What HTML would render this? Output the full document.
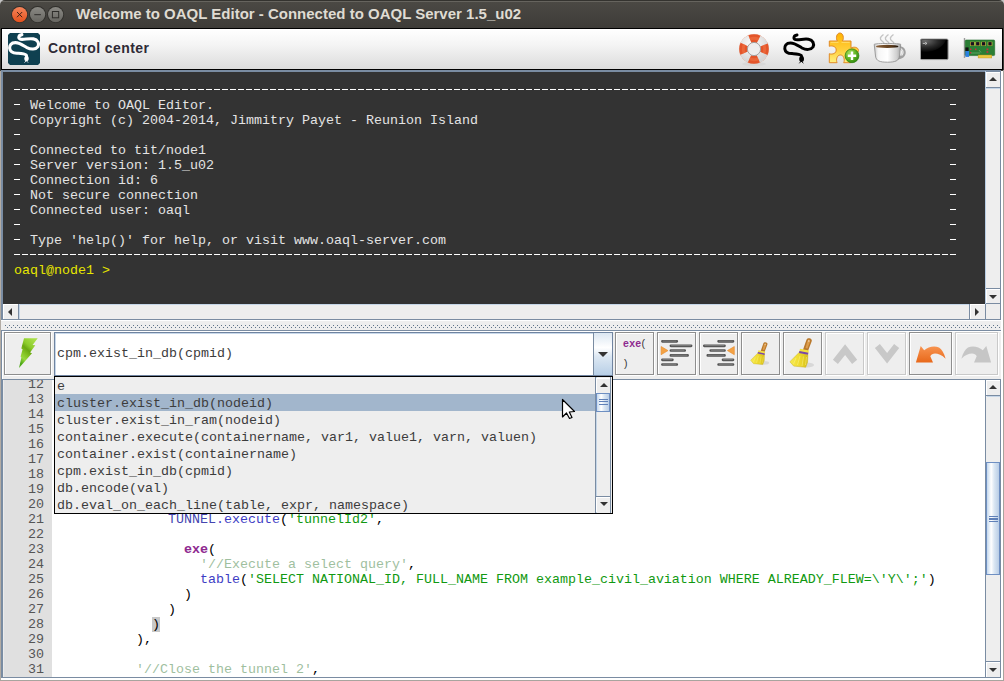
<!DOCTYPE html>
<html><head><meta charset="utf-8">
<style>
*{margin:0;padding:0;box-sizing:border-box}
html,body{width:1004px;height:681px;overflow:hidden;background:#eeeeee;position:relative;font-family:"Liberation Sans",sans-serif}
.a{position:absolute}
.mono{font-family:"Liberation Mono",monospace;font-size:13.333px;line-height:15px;white-space:pre}
#title{left:0;top:0;width:1004px;height:29px;background:linear-gradient(#34332f 0 1px,#66645e 1px 2px,#4b4944 2px,#3e3c38 28px);border-radius:5px 5px 0 0}
#titletext{left:76px;top:5px;font-size:15px;font-weight:bold;color:#dfdbd2;white-space:pre}
#tb{left:0;top:28px;width:1004px;height:43px;background:#3c3b37}
#tbin{left:2px;top:29px;width:1000px;height:40px;background:linear-gradient(#ffffff,#f4f4f4 40%,#dcdcdc)}
#cc{left:48px;top:40px;font-size:14px;font-weight:bold;color:#2e2a36;letter-spacing:0.4px;white-space:pre}
/* console panel */
#cpanel{left:1px;top:70px;width:1000px;height:250px;border:1px solid #7a8ca2;border-left-width:2px;border-top-width:2px;background:#eeeeee}
#console{left:3px;top:72px;width:982px;height:232px;background:#333333;overflow:hidden}
.dash{height:1px;background:repeating-linear-gradient(90deg,#ffffff 0 6px,transparent 6px 8px)}
.sb{background:#eeeeee}
.btnarrow{background:#eeeeee}
</style></head><body>
<!-- left gray column -->
<div class="a" style="left:0;top:70px;width:1px;height:611px;background:#b3aca4"></div>

<div class="a" style="left:0;top:0;width:1004px;height:8px;background:#c4c4c4"></div>
<div id="title" class="a"></div>
<div id="titletext" class="a">Welcome to OAQL Editor - Connected to OAQL Server 1.5_u02</div>
<svg class="a" style="left:0;top:0" width="70" height="29">
  <defs>
    <linearGradient id="gclose" x1="0" y1="0" x2="0" y2="1"><stop offset="0" stop-color="#f5845a"/><stop offset="1" stop-color="#e5521e"/></linearGradient>
    <linearGradient id="ggray" x1="0" y1="0" x2="0" y2="1"><stop offset="0" stop-color="#8a8984"/><stop offset="1" stop-color="#676661"/></linearGradient>
  </defs>
  <circle cx="19.6" cy="14.6" r="8.5" fill="#302f2b"/>
  <circle cx="19.6" cy="14.6" r="7.6" fill="url(#gclose)"/>
  <path d="M17,12 L22.2,17.2 M22.2,12 L17,17.2" stroke="#2e1a12" stroke-width="0.9"/>
  <circle cx="37.6" cy="14.6" r="8.5" fill="#302f2b"/>
  <circle cx="37.6" cy="14.6" r="7.6" fill="url(#ggray)"/>
  <path d="M34.3 14.7 H40.9" stroke="#2e2d2a" stroke-width="1"/>
  <circle cx="55.6" cy="14.6" r="8.5" fill="#302f2b"/>
  <circle cx="55.6" cy="14.6" r="7.6" fill="url(#ggray)"/>
  <rect x="52.4" y="11.5" width="6.3" height="6.3" fill="none" stroke="#2e2d2a" stroke-width="1"/>
</svg>

<div id="tb" class="a"></div>
<div class="a" style="left:1px;top:28px;width:1002px;height:42px;background:#000"></div>
<div id="tbin" class="a"></div>
<!-- logo -->
<svg class="a" style="left:8px;top:33px" width="32" height="32" viewBox="0 0 32 32">
  <path d="M2,0 H30 L32,2 V30 L30,32 H2 L0,30 V2 Z" fill="#0f4050"/>
  <g transform="translate(-3.1,-2.4)">
  <path d="M17,4 C13.5,4.5 13,8 15.5,8.6 C19,9.3 24,7.5 28.5,8.3 C33,9 34.5,13 33,16 C31,19 26,19 22,17 C18.5,15 15,12 10.5,12 C6,12 4.5,15 4.8,17.8 C5.2,21 8,22.5 12,22.6 C16,22.7 19.5,22.5 21.3,24.5 C22,25.5 21.8,26.5 21.6,27.5" fill="none" stroke="#ffffff" stroke-width="3.1" stroke-linecap="round"/>
  <ellipse cx="21.6" cy="28" rx="2.2" ry="2.7" fill="#fff"/>
  <path d="M21.4,30 L19.6,32 M21.4,30 L23.2,32" stroke="#fff" stroke-width="0.8"/>
  </g>
</svg>
<div id="cc" class="a">Control center</div>

<!-- toolbar icons -->
<svg class="a" style="left:736px;top:31px" width="36" height="36" viewBox="0 0 36 36">
  <defs>
    <radialGradient id="gwr" cx="0.4" cy="0.3" r="0.8"><stop offset="0" stop-color="#ffffff"/><stop offset="1" stop-color="#d6d6d6"/></radialGradient>
  </defs>
  <ellipse cx="18" cy="33" rx="12" ry="2" fill="#d8d8d8"/>
  <circle cx="18" cy="18" r="14.6" fill="none" stroke="#ec7a50" stroke-width="0.8"/>
  <circle cx="18" cy="18" r="10.7" fill="none" stroke="url(#gwr)" stroke-width="8.2"/>
  <circle cx="18" cy="18" r="10.7" fill="none" stroke="#e4552a" stroke-width="8.2" stroke-dasharray="9 7.8" stroke-dashoffset="4.5"/>
  <circle cx="18" cy="18" r="10.7" fill="none" stroke="#f27a4a" stroke-width="3" stroke-dasharray="9 7.8" stroke-dashoffset="4.5" opacity="0.5"/>
  <circle cx="18" cy="18" r="6.6" fill="#eeeeee" stroke="#9a9a9a" stroke-width="0.9"/>
  <circle cx="18" cy="18" r="14.8" fill="none" stroke="#b0b0b0" stroke-width="0.5" stroke-dasharray="0 16.8" />
</svg>
<svg class="a" style="left:780px;top:31px" width="38" height="36" viewBox="0 0 38 36">
  <path d="M17,4 C13.5,4.5 13,8 15.5,8.6 C19,9.3 24,7.5 28.5,8.3 C33,9 34.5,13 33,16 C31,19 26,19 22,17 C18.5,15 15,12 10.5,12 C6,12 4.5,15 4.8,17.8 C5.2,21 8,22.5 12,22.6 C16,22.7 19.5,22.5 21.3,24.5 C22,25.5 21.8,26.5 21.6,27.5" fill="none" stroke="#000" stroke-width="3" stroke-linecap="round"/>
  <ellipse cx="21.6" cy="28" rx="2.4" ry="2.9" fill="#000"/>
  <path d="M21.3,30 L19.3,32.3 M21.3,30 L23.3,32.3" stroke="#000" stroke-width="0.9"/>
</svg>
<svg class="a" style="left:824px;top:31px" width="38" height="36" viewBox="0 0 38 36">
  <defs><linearGradient id="gpz" x1="0" y1="0" x2="0" y2="1"><stop offset="0" stop-color="#ffb400"/><stop offset="0.6" stop-color="#ffd040"/><stop offset="1" stop-color="#fff080"/></linearGradient>
  <radialGradient id="gplus" cx="0.35" cy="0.3" r="0.75"><stop offset="0" stop-color="#a8e060"/><stop offset="0.6" stop-color="#5cb020"/><stop offset="1" stop-color="#2f8a10"/></radialGradient></defs>
  <path d="M5.3,10 H13.4 C11.5,7.5 12.5,2 15.9,2 C19.3,2 20.3,7.5 18.4,10 H27 V17 C29.5,15.5 34.5,16 34.5,19.5 C34.5,23 29.5,23.5 27,22 V31.7 H19.7 C21,29 20,24 16.4,24 C12.8,24 11.8,29 13.1,31.7 H5.3 V22.7 C8.5,23.7 12.2,22.5 12.2,19 C12.2,15.5 8.5,14.3 5.3,15.3 Z" fill="url(#gpz)" stroke="#e08a28" stroke-width="1"/>
  <path d="M6.6,11.3 H14.5 M17.5,11.3 H25.7" stroke="#fff6b0" stroke-width="0.7" opacity="0.8"/>
  <circle cx="28" cy="24.8" r="6.9" fill="url(#gplus)" stroke="#2f8010" stroke-width="0.8"/>
  <path d="M28,20.6 V29 M23.8,24.8 H32.2" stroke="#fff" stroke-width="2.4"/>
</svg>
<svg class="a" style="left:870px;top:31px" width="38" height="36" viewBox="0 0 38 36">
  <defs><linearGradient id="gcup" x1="0" y1="0" x2="1" y2="0"><stop offset="0" stop-color="#c8c8c8"/><stop offset="0.15" stop-color="#f6f6f6"/><stop offset="0.5" stop-color="#ffffff"/><stop offset="0.85" stop-color="#d0d0d0"/><stop offset="1" stop-color="#a8a8a8"/></linearGradient>
  <linearGradient id="gcof" x1="0" y1="0" x2="1" y2="0"><stop offset="0" stop-color="#8a6038"/><stop offset="0.7" stop-color="#5a3a1a"/><stop offset="1" stop-color="#1a1008"/></linearGradient></defs>
  <path d="M13.5,3.5 C10,6 9,8 12.5,10.5 C13.5,11.3 14,12 14,12.5 M18.5,3.5 C15,6 14,8 17.5,10.5 C18.5,11.3 19,12 19,12.5 M23.5,3.5 C20,6 19,8 22.5,10.5 C23.5,11.3 24,12 24,12.5" fill="none" stroke="#c4c4c4" stroke-width="1.4"/>
  <path d="M28,17 C34,16 36,22 32,25.5 C30,27 28,27 27,27" fill="none" stroke="#a0a0a0" stroke-width="3.2"/>
  <path d="M28,17.5 C33,17 34.5,21.5 31.5,24.5" fill="none" stroke="#e8e8e8" stroke-width="1.2"/>
  <path d="M4.2,13.4 C4.2,12.2 30.7,12.2 30.7,13.4 L29.5,25 C29,30 25,31.2 17.5,31.2 C10,31.2 6,30 5.5,25 Z" fill="url(#gcup)" stroke="#8a8a8a" stroke-width="0.8"/>
  <ellipse cx="17.2" cy="15.4" rx="11.3" ry="1.7" fill="url(#gcof)"/>
</svg>
<svg class="a" style="left:914px;top:31px" width="38" height="36" viewBox="0 0 38 36">
  <defs><radialGradient id="gterm" cx="0.15" cy="0.1" r="0.95"><stop offset="0" stop-color="#6e6e6e"/><stop offset="0.55" stop-color="#2a2a2a"/><stop offset="1" stop-color="#000"/></radialGradient></defs>
  <rect x="6.5" y="8" width="27.6" height="20.6" rx="1.3" fill="#000" stroke="#a0a0a0" stroke-width="1"/>
  <path d="M7.2,8.7 H32 C29,17 18,22.5 7.2,20.5 Z" fill="url(#gterm)"/>
  <path d="M8.8,12.4 H11.5 M11.2,11.3 L13,12.4 L11.2,13.5" fill="none" stroke="#d8d8d8" stroke-width="0.8"/>
</svg>
<svg class="a" style="left:958px;top:31px" width="42" height="36" viewBox="0 0 42 36">
  <rect x="5.8" y="7" width="1.4" height="20" fill="#9a9a9a"/>
  <rect x="7.2" y="9" width="29.5" height="15.6" rx="1" fill="#2a7e34" stroke="#1f6a28" stroke-width="0.6"/>
  <rect x="7.4" y="16.4" width="3.2" height="3.6" fill="#111"/>
  <rect x="7.4" y="20" width="3.7" height="5.9" fill="#2a80e0"/>
  <rect x="20.1" y="24" width="13.7" height="3" fill="#e8c840" stroke="#c09020" stroke-width="0.4"/>
  <g fill="#e8d040"><rect x="12" y="10.8" width="4.6" height="4"/><rect x="17.5" y="10.8" width="4.6" height="4"/><rect x="23.3" y="10.8" width="4.6" height="4"/><rect x="29.7" y="10.8" width="4.6" height="4"/></g>
  <g fill="#1a1020"><rect x="12.6" y="11.1" width="3.4" height="3.4"/><rect x="18.1" y="11.1" width="3.4" height="3.4"/><rect x="23.9" y="11.1" width="3.4" height="3.4"/><rect x="30.3" y="11.1" width="3.4" height="3.4"/></g>
  <g fill="#d02840"><rect x="16.9" y="17.5" width="1.6" height="1.6"/><rect x="28.5" y="17.5" width="1.8" height="1.6"/><rect x="28.5" y="20.2" width="1.8" height="1.6"/><rect x="12" y="17.5" width="1.4" height="1.6"/><rect x="12" y="21" width="1.4" height="1.4"/></g>
  <path d="M13,22 H22 M21,19 L23,21.5" stroke="#7ac080" stroke-width="0.6"/>
</svg>

<!-- console panel -->
<div id="cpanel" class="a"></div>
<div id="console" class="a"></div>
<div class="a dash" style="left:14px;top:89px;width:942px"></div>
<div class="a dash" style="left:14px;top:254px;width:942px"></div>
<div class="a dash" style="left:14px;top:104px;width:6px"></div>
<div class="a dash" style="left:950px;top:104px;width:6px"></div>
<div class="a mono" style="left:30px;top:98px;color:#e4e4e4">Welcome to OAQL Editor.</div>
<div class="a dash" style="left:14px;top:119px;width:6px"></div>
<div class="a dash" style="left:950px;top:119px;width:6px"></div>
<div class="a mono" style="left:30px;top:113px;color:#e4e4e4">Copyright (c) 2004-2014, Jimmitry Payet - Reunion Island</div>
<div class="a dash" style="left:14px;top:134px;width:6px"></div>
<div class="a dash" style="left:950px;top:134px;width:6px"></div>
<div class="a dash" style="left:14px;top:149px;width:6px"></div>
<div class="a dash" style="left:950px;top:149px;width:6px"></div>
<div class="a mono" style="left:30px;top:143px;color:#e4e4e4">Connected to tit/node1</div>
<div class="a dash" style="left:14px;top:164px;width:6px"></div>
<div class="a dash" style="left:950px;top:164px;width:6px"></div>
<div class="a mono" style="left:30px;top:158px;color:#e4e4e4">Server version: 1.5_u02</div>
<div class="a dash" style="left:14px;top:179px;width:6px"></div>
<div class="a dash" style="left:950px;top:179px;width:6px"></div>
<div class="a mono" style="left:30px;top:173px;color:#e4e4e4">Connection id: 6</div>
<div class="a dash" style="left:14px;top:194px;width:6px"></div>
<div class="a dash" style="left:950px;top:194px;width:6px"></div>
<div class="a mono" style="left:30px;top:188px;color:#e4e4e4">Not secure connection</div>
<div class="a dash" style="left:14px;top:209px;width:6px"></div>
<div class="a dash" style="left:950px;top:209px;width:6px"></div>
<div class="a mono" style="left:30px;top:203px;color:#e4e4e4">Connected user: oaql</div>
<div class="a dash" style="left:14px;top:224px;width:6px"></div>
<div class="a dash" style="left:950px;top:224px;width:6px"></div>
<div class="a dash" style="left:14px;top:239px;width:6px"></div>
<div class="a dash" style="left:950px;top:239px;width:6px"></div>
<div class="a mono" style="left:30px;top:233px;color:#e4e4e4">Type 'help()' for help, or visit www.oaql-server.com</div>
<div class="a mono" style="left:14px;top:263px;color:#e6e600">oaql@node1 &gt;</div>


<!-- console v-scrollbar -->
<div class="a" style="left:985px;top:71px;width:1px;height:233px;background:#b8cde4"></div>
<div class="a" style="left:1000px;top:71px;width:1px;height:249px;background:#7a8ca2"></div>
<div class="a" style="left:986px;top:72px;width:14px;height:15px;background:#eeeeee;border-top:1px solid #fff;border-left:1px solid #fff"></div>
<div class="a" style="left:986px;top:87px;width:14px;height:1px;background:#7a8ca2"></div>
<div class="a" style="left:986px;top:88px;width:14px;height:1px;background:#c5d6e8"></div>
<div class="a" style="left:989px;top:77px;width:0;height:0;border-left:4px solid transparent;border-right:4px solid transparent;border-bottom:4px solid #333"></div>
<div class="a" style="left:986px;top:288px;width:14px;height:1px;background:#7a8ca2"></div>
<div class="a" style="left:986px;top:289px;width:14px;height:15px;background:#eeeeee;border-top:1px solid #fff;border-left:1px solid #fff"></div>
<div class="a" style="left:989px;top:295px;width:0;height:0;border-left:4px solid transparent;border-right:4px solid transparent;border-top:4px solid #333"></div>
<!-- console h-scrollbar -->
<div class="a" style="left:3px;top:304px;width:982px;height:15px;background:#eeeeee"></div>
<div class="a" style="left:19px;top:304px;width:950px;height:1px;background:#c5d6e8"></div>
<div class="a" style="left:19px;top:304px;width:1px;height:15px;background:#c5d6e8"></div>
<div class="a" style="left:3px;top:304px;width:15px;height:15px;border-top:1px solid #fff;border-left:1px solid #fff"></div>
<div class="a" style="left:18px;top:304px;width:1px;height:15px;background:#7a8ca2"></div>
<div class="a" style="left:8px;top:308px;width:0;height:0;border-top:4px solid transparent;border-bottom:4px solid transparent;border-right:4px solid #333"></div>
<div class="a" style="left:969px;top:304px;width:1px;height:15px;background:#7a8ca2"></div>
<div class="a" style="left:970px;top:304px;width:15px;height:15px;border-top:1px solid #fff;border-left:1px solid #fff"></div>
<div class="a" style="left:975px;top:308px;width:0;height:0;border-top:4px solid transparent;border-bottom:4px solid transparent;border-left:4px solid #333"></div>
<div class="a" style="left:985px;top:304px;width:1px;height:15px;background:#7a8ca2"></div>
<div class="a" style="left:986px;top:304px;width:14px;height:15px;background:#eeeeee"></div>
<!-- splitter -->
<div class="a" style="left:1px;top:320px;width:1001px;height:1px;background:#ffffff"></div>
<div class="a" style="left:5px;top:325px;width:996px;height:1px;background:repeating-linear-gradient(90deg,#5f7389 0 1px,transparent 1px 4px)"></div>
<div class="a" style="left:7px;top:327px;width:994px;height:1px;background:repeating-linear-gradient(90deg,#5f7389 0 1px,transparent 1px 4px)"></div>
<!-- lower toolbar panel -->
<div class="a" style="left:1px;top:330px;width:1001px;height:50px;border:1px solid #7a8ca2;border-right:none;background:#eeeeee"></div>
<div class="a" style="left:2px;top:331px;width:1000px;height:1px;background:#fff"></div>
<div class="a" style="left:2px;top:331px;width:1px;height:48px;background:#fff"></div>

<!-- buttons -->
<div class="a" style="left:5px;top:333px;width:47px;height:43px;border:1px solid #fff;background:#eeeeee"></div><div class="a" style="left:4px;top:332px;width:47px;height:43px;border:1px solid #8e8e8e"></div>
<div class="a" style="left:616px;top:333px;width:39px;height:43px;border:1px solid #fff;background:#eeeeee"></div><div class="a" style="left:615px;top:332px;width:39px;height:43px;border:1px solid #8e8e8e"></div>
<div class="a" style="left:658px;top:333px;width:39px;height:43px;border:1px solid #fff;background:#eeeeee"></div><div class="a" style="left:657px;top:332px;width:39px;height:43px;border:1px solid #8e8e8e"></div>
<div class="a" style="left:700px;top:333px;width:39px;height:43px;border:1px solid #fff;background:#eeeeee"></div><div class="a" style="left:699px;top:332px;width:39px;height:43px;border:1px solid #8e8e8e"></div>
<div class="a" style="left:742px;top:333px;width:39px;height:43px;border:1px solid #fff;background:#eeeeee"></div><div class="a" style="left:741px;top:332px;width:39px;height:43px;border:1px solid #8e8e8e"></div>
<div class="a" style="left:784px;top:333px;width:39px;height:43px;border:1px solid #fff;background:#eeeeee"></div><div class="a" style="left:783px;top:332px;width:39px;height:43px;border:1px solid #8e8e8e"></div>
<div class="a" style="left:826px;top:333px;width:39px;height:43px;border:1px solid #fff;background:#eeeeee"></div><div class="a" style="left:825px;top:332px;width:39px;height:43px;border:1px solid #c9c9c9"></div>
<div class="a" style="left:868px;top:333px;width:39px;height:43px;border:1px solid #fff;background:#eeeeee"></div><div class="a" style="left:867px;top:332px;width:39px;height:43px;border:1px solid #c9c9c9"></div>
<div class="a" style="left:910px;top:333px;width:43px;height:43px;border:1px solid #fff;background:#eeeeee"></div><div class="a" style="left:909px;top:332px;width:43px;height:43px;border:1px solid #8e8e8e"></div>
<div class="a" style="left:956px;top:333px;width:43px;height:43px;border:1px solid #fff;background:#eeeeee"></div><div class="a" style="left:955px;top:332px;width:43px;height:43px;border:1px solid #c9c9c9"></div>
<div class="a" style="left:54px;top:332px;width:559px;height:44px;border:1px solid #7084a0;background:#fff"></div>
<div class="a" style="left:55px;top:333px;width:538px;height:1px;background:#c8d8ea"></div>
<div class="a" style="left:55px;top:333px;width:1px;height:42px;background:#c8d8ea"></div>
<div class="a" style="left:593px;top:333px;width:19px;height:42px;border-left:1px solid #7a8ca2;background:linear-gradient(#dce7f2,#ffffff 35%,#dde8f3 55%,#b8cfe6)"></div>
<div class="a" style="left:598px;top:352px;width:0;height:0;border-left:5px solid transparent;border-right:5px solid transparent;border-top:5px solid #333"></div>
<div class="a mono" style="left:57px;top:346px;color:#3c3c3c">cpm.exist_in_db(cpmid)</div>

<!-- button icons -->
<svg class="a" style="left:0;top:328px" width="56" height="48" viewBox="0 328 56 48">
  <defs><linearGradient id="gbolt" x1="0.8" y1="0.05" x2="0.3" y2="0.95">
    <stop offset="0" stop-color="#a8de48"/><stop offset="0.3" stop-color="#8ccc2c"/><stop offset="0.45" stop-color="#6aa812"/><stop offset="0.6" stop-color="#80c020"/><stop offset="0.8" stop-color="#98d83c"/><stop offset="1" stop-color="#4ea818"/></linearGradient></defs>
  <path d="M24,338.2 L37.7,338.2 L32.6,344.9 L35.3,345.3 L30.1,352.6 L32,353.3 L19,368 L21.4,357.6 L20.6,356.4 L22.6,349.3 L21.3,348.4 Z" fill="url(#gbolt)"/>
</svg>
<div class="a" style="left:623px;top:337px;font-family:'Liberation Sans',sans-serif;font-weight:bold;font-size:10.5px;color:#8e2a90;letter-spacing:0.3px;white-space:pre">exe<span style="color:#333;font-weight:normal">(</span></div>
<div class="a" style="left:624px;top:357px;font-family:'Liberation Sans',sans-serif;font-size:10.5px;color:#333;white-space:pre">)</div>
<svg class="a" style="left:657px;top:332px" width="39" height="43" viewBox="0 0 39 43">
  <g stroke="#545454" stroke-width="2.7" stroke-linecap="round">
    <path d="M5.4 9.3 H19.8 M13.9 13.8 H34.1 M13.9 18.5 H27.7 M13.9 23.4 H30.6 M5.4 27.8 H15.4 M5.4 32.5 H19.8"/>
  </g>
  <g stroke="#8a8a8a" stroke-width="0.8" stroke-linecap="round">
    <path d="M6 9.1 H19 M14.5 13.6 H33.5 M14.5 18.3 H27 M14.5 23.2 H30 M6 27.6 H14.8 M6 32.3 H19"/>
  </g>
  <path d="M4.1 14.5 L11 18.6 L4.1 22.7 Z" fill="#f3a244" stroke="#e88a2a" stroke-width="0.6"/>
</svg>
<svg class="a" style="left:699px;top:332px" width="39" height="43" viewBox="0 0 39 43">
  <g transform="translate(39.4,0) scale(-1,1)">
  <g stroke="#545454" stroke-width="2.7" stroke-linecap="round">
    <path d="M5.4 9.3 H19.8 M13.9 13.8 H34.1 M13.9 18.5 H27.7 M13.9 23.4 H30.6 M5.4 27.8 H15.4 M5.4 32.5 H19.8"/>
  </g>
  <g stroke="#8a8a8a" stroke-width="0.8" stroke-linecap="round">
    <path d="M6 9.1 H19 M14.5 13.6 H33.5 M14.5 18.3 H27 M14.5 23.2 H30 M6 27.6 H14.8 M6 32.3 H19"/>
  </g>
  <path d="M4.1 14.5 L11 18.6 L4.1 22.7 Z" fill="#f3a244" stroke="#e88a2a" stroke-width="0.6"/>
  </g>
</svg>
<svg width="0" height="0" style="position:absolute">
  <defs>
    <linearGradient id="gbr" x1="0" y1="0" x2="1" y2="0"><stop offset="0" stop-color="#f6ea50"/><stop offset="0.5" stop-color="#f0dc30"/><stop offset="1" stop-color="#d8c018"/></linearGradient>
    <linearGradient id="ghd" x1="0" y1="0" x2="1" y2="0"><stop offset="0" stop-color="#a86a28"/><stop offset="0.5" stop-color="#d8953c"/><stop offset="1" stop-color="#a86a28"/></linearGradient>
    <g id="broom">
      <ellipse cx="24" cy="33" rx="7" ry="2.5" fill="#d8d8d8"/>
      <path d="M25.2,6.2 C27.5,5.8 29.5,7.5 28.6,9.5 L25,19 L20,17.8 L23.2,8.5 C23.6,7.2 24.2,6.4 25.2,6.2 Z" fill="#b8782c"/>
      <path d="M25.5,7.5 C26.8,7.5 27.5,8.5 27,9.8 L24.5,16.5 L22.5,16 L24.3,9.2 Z" fill="#dc9c4c"/>
      <circle cx="25.8" cy="9" r="0.7" fill="#f4e0c8"/>
      <path d="M15.8 20.8 L24.9 22.4 L24.6 30 L22.7 35.3 L10.7 34.1 L6.9 29.7 Z" fill="url(#gbr)" stroke="#c8b020" stroke-width="0.5"/>
      <path d="M13 26 L10.5 32 M17 24 L14.5 33 M20.5 24.5 L19 34 M23.5 25 L22.5 33" stroke="#fff8a0" stroke-width="0.6" opacity="0.7"/>
      <path d="M17 16.7 L25.9 18.6 L25 22.7 L16.1 20.9 Z" fill="#f2e040"/>
      <path d="M16.4 19 L25.4 20.8 L24.9 22.7 L16 20.9 Z" fill="#7a48a8"/>
    </g>
  </defs>
</svg>
<svg class="a" style="left:741px;top:332px" width="39" height="43" viewBox="0 0 39 43"><use href="#broom" transform="translate(4.3,5.4) scale(0.77)"/></svg>
<svg class="a" style="left:783px;top:332px" width="39" height="43" viewBox="0 0 39 43"><use href="#broom"/></svg>
<svg class="a" style="left:825px;top:332px" width="39" height="43" viewBox="0 0 39 43">
  <path d="M20.1 12.3 L32.2 27.8 L27.1 31.9 L20.1 23 L12.9 31.9 L7.9 27.8 Z" fill="#c8c8c8"/>
</svg>
<svg class="a" style="left:867px;top:332px" width="39" height="43" viewBox="0 0 39 43">
  <path d="M20.1 31.6 L32.2 16.1 L27.1 12 L20.1 20.9 L12.9 12 L7.9 16.1 Z" fill="#c8c8c8"/>
</svg>
<svg class="a" style="left:909px;top:332px" width="43" height="43" viewBox="0 0 43 43">
  <defs><linearGradient id="gundo" x1="0" y1="0" x2="0" y2="1"><stop offset="0" stop-color="#f89450"/><stop offset="1" stop-color="#e8681a"/></linearGradient></defs>
  <path d="M11.7,13.9 L15.2,18.3 C19,15 25,13 30,15.5 C33,17.5 35,21 36.6,26.8 C33,23 29,21.5 26,21.5 C24,21.5 22,22.5 21.3,24.3 L24,30.6 L6.9,30.6 Z" fill="url(#gundo)"/>
</svg>
<svg class="a" style="left:955px;top:332px" width="43" height="43" viewBox="0 0 43 43">
  <path transform="translate(43,0) scale(-1,1)" d="M11.7,13.9 L15.2,18.3 C19,15 25,13 30,15.5 C33,17.5 35,21 36.6,26.8 C33,23 29,21.5 26,21.5 C24,21.5 22,22.5 21.3,24.3 L24,30.6 L6.9,30.6 Z" fill="#c6c6c6"/>
</svg>

<!-- editor -->
<div class="a" style="left:1px;top:379px;width:1001px;height:299px;border:1px solid #7a8ca2;border-right:none;background:#fff"></div>
<div class="a" style="left:2px;top:380px;width:1px;height:297px;background:#7a8ca2"></div>
<div class="a" style="left:3px;top:380px;width:49px;height:297px;background:#e0e0e0"></div>
<div class="a mono" style="left:0;width:44px;text-align:right;top:377px;color:#555;clip-path:inset(3px 0 0 0)">12</div>
<div class="a mono" style="left:0;width:44px;text-align:right;top:392px;color:#555">13</div>
<div class="a mono" style="left:0;width:44px;text-align:right;top:407px;color:#555">14</div>
<div class="a mono" style="left:0;width:44px;text-align:right;top:422px;color:#555">15</div>
<div class="a mono" style="left:0;width:44px;text-align:right;top:437px;color:#555">16</div>
<div class="a mono" style="left:0;width:44px;text-align:right;top:452px;color:#555">17</div>
<div class="a mono" style="left:0;width:44px;text-align:right;top:467px;color:#555">18</div>
<div class="a mono" style="left:0;width:44px;text-align:right;top:482px;color:#555">19</div>
<div class="a mono" style="left:0;width:44px;text-align:right;top:497px;color:#555">20</div>
<div class="a mono" style="left:0;width:44px;text-align:right;top:512px;color:#555">21</div>
<div class="a mono" style="left:0;width:44px;text-align:right;top:527px;color:#555">22</div>
<div class="a mono" style="left:0;width:44px;text-align:right;top:542px;color:#555">23</div>
<div class="a mono" style="left:0;width:44px;text-align:right;top:557px;color:#555">24</div>
<div class="a mono" style="left:0;width:44px;text-align:right;top:572px;color:#555">25</div>
<div class="a mono" style="left:0;width:44px;text-align:right;top:587px;color:#555">26</div>
<div class="a mono" style="left:0;width:44px;text-align:right;top:602px;color:#555">27</div>
<div class="a mono" style="left:0;width:44px;text-align:right;top:617px;color:#555">28</div>
<div class="a mono" style="left:0;width:44px;text-align:right;top:632px;color:#555">29</div>
<div class="a mono" style="left:0;width:44px;text-align:right;top:647px;color:#555">30</div>
<div class="a mono" style="left:0;width:44px;text-align:right;top:662px;color:#555">31</div>
<div class="a mono" style="left:56px;top:512px">              <span style="color:#4545b0">TUNNEL</span><span style="color:#3d3dc4">.execute</span><span style="color:#000">(</span><span style="color:#119911">'tunnelId2'</span><span style="color:#000">,</span></div>
<div class="a mono" style="left:56px;top:542px">                <span style="color:#8e2a90;font-weight:bold">exe</span><span style="color:#000">(</span></div>
<div class="a mono" style="left:56px;top:557px">                  <span style="color:#9fbf9f">'//Execute a select query'</span><span style="color:#000">,</span></div>
<div class="a mono" style="left:56px;top:572px">                  <span style="color:#3d3dc4">table</span><span style="color:#000">(</span><span style="color:#119911">'SELECT NATIONAL_ID, FULL_NAME FROM example_civil_aviation WHERE ALREADY_FLEW=\'Y\';'</span><span style="color:#000">)</span></div>
<div class="a mono" style="left:56px;top:587px">                <span style="color:#000">)</span></div>
<div class="a mono" style="left:56px;top:602px">              <span style="color:#000">)</span></div>
<div class="a mono" style="left:56px;top:617px">            <span style="background:#c8c8c8;color:#000">)</span></div>
<div class="a mono" style="left:56px;top:632px">          <span style="color:#000">),</span></div>
<div class="a mono" style="left:56px;top:662px">          <span style="color:#9fbf9f">'//Close the tunnel 2'</span><span style="color:#000">,</span></div>
<div class="a" style="left:985px;top:380px;width:1px;height:297px;background:#7a8ca2"></div>
<div class="a" style="left:986px;top:380px;width:1px;height:297px;background:#c5d6e8"></div>
<div class="a" style="left:1000px;top:380px;width:1px;height:297px;background:#7a8ca2"></div>
<div class="a" style="left:986px;top:380px;width:14px;height:297px;background:#eeeeee"></div>
<div class="a" style="left:986px;top:380px;width:14px;height:15px;border-top:1px solid #fff;border-left:1px solid #fff"></div>
<div class="a" style="left:986px;top:395px;width:14px;height:1px;background:#7a8ca2"></div>
<div class="a" style="left:987px;top:396px;width:13px;height:1px;background:#c5d6e8"></div>
<div class="a" style="left:989px;top:385px;width:0;height:0;border-left:4px solid transparent;border-right:4px solid transparent;border-bottom:4px solid #333"></div>
<div class="a" style="left:986px;top:661px;width:14px;height:1px;background:#7a8ca2"></div>
<div class="a" style="left:986px;top:662px;width:14px;height:15px;border-top:1px solid #fff;border-left:1px solid #fff"></div>
<div class="a" style="left:989px;top:668px;width:0;height:0;border-left:4px solid transparent;border-right:4px solid transparent;border-top:4px solid #333"></div>
<div class="a" style="left:986px;top:462px;width:14px;height:113px;border:1px solid #6e8fc2;background:linear-gradient(90deg,#c4d8ee,#ffffff 35%,#dbe7f3 60%,#b9cde6)"></div>
<div class="a" style="left:989px;top:516px;width:9px;height:6px;background:repeating-linear-gradient(#5f80b8 0 1px,transparent 1px 2.5px)"></div>
<div class="a" style="left:1001px;top:380px;width:1px;height:298px;background:#fff"></div>

<div class="a" style="left:54px;top:376px;width:559px;height:138px;border:1px solid #000;background:#eeeeee"></div>
<div class="a" style="left:55px;top:394px;width:540px;height:17px;background:#a2b6cc"></div>
<div class="a mono" style="left:57px;top:379px;color:#3c3c3c">e</div>
<div class="a mono" style="left:57px;top:396px;color:#3c3c3c">cluster.exist_in_db(nodeid)</div>
<div class="a mono" style="left:57px;top:413px;color:#3c3c3c">cluster.exist_in_ram(nodeid)</div>
<div class="a mono" style="left:57px;top:430px;color:#3c3c3c">container.execute(containername, var1, value1, varn, valuen)</div>
<div class="a mono" style="left:57px;top:447px;color:#3c3c3c">container.exist(containername)</div>
<div class="a mono" style="left:57px;top:464px;color:#3c3c3c">cpm.exist_in_db(cpmid)</div>
<div class="a mono" style="left:57px;top:481px;color:#3c3c3c">db.encode(val)</div>
<div class="a mono" style="left:57px;top:498px;color:#3c3c3c">db.eval_on_each_line(table, expr, namespace)</div>
<div class="a" style="left:595px;top:377px;width:1px;height:136px;background:#7a8ca2"></div>
<div class="a" style="left:596px;top:377px;width:1px;height:136px;background:#c5d6e8"></div>
<div class="a" style="left:610px;top:377px;width:1px;height:136px;background:#7a8ca2"></div>
<div class="a" style="left:596px;top:378px;width:14px;height:15px;border-top:1px solid #fff;border-left:1px solid #fff"></div>
<div class="a" style="left:600px;top:383px;width:0;height:0;border-left:4px solid transparent;border-right:4px solid transparent;border-bottom:4px solid #333"></div>
<div class="a" style="left:596px;top:393px;width:14px;height:19px;border:1px solid #6e8fc2;background:linear-gradient(90deg,#c4d8ee,#ffffff 35%,#dbe7f3 60%,#b9cde6)"></div>
<div class="a" style="left:599px;top:399px;width:9px;height:6px;background:repeating-linear-gradient(#5f80b8 0 1px,transparent 1px 2.5px)"></div>
<div class="a" style="left:596px;top:496px;width:14px;height:1px;background:#7a8ca2"></div>
<div class="a" style="left:596px;top:497px;width:14px;height:15px;border-top:1px solid #fff;border-left:1px solid #fff"></div>
<div class="a" style="left:600px;top:502px;width:0;height:0;border-left:4px solid transparent;border-right:4px solid transparent;border-top:4px solid #333"></div>
<svg class="a" style="left:561px;top:398px" width="16" height="22" viewBox="0 0 16 22"><path d="M1.5 1.5 V19 L5.5 15 L8.5 20.5 L11 19.5 L8.3 14 L13.5 13.5 Z" fill="#fff" stroke="#000" stroke-width="1.2" stroke-linejoin="round"/></svg>


<!-- window frame -->
<div class="a" style="left:1px;top:678px;width:1002px;height:2px;background:#ffffff"></div>
<div class="a" style="left:0;top:680px;width:1004px;height:1px;background:#a8a49e"></div>
<div class="a" style="left:1001px;top:71px;width:2px;height:609px;background:#ffffff"></div>
<div class="a" style="left:1003px;top:70px;width:1px;height:611px;background:#a8a49e"></div>
<div class="a" style="left:3px;top:380px;width:1px;height:297px;background:#ececec"></div>
<div class="a" style="left:986px;top:303px;width:15px;height:1px;background:#7a8ca2"></div>
</body></html>
